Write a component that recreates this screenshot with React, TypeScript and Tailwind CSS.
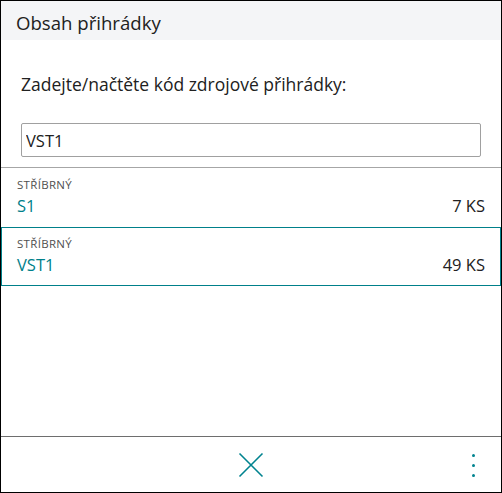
import React from "react";

const ROWS: { zone: string; bin: string; qty: string; selected?: boolean }[] = [
  { zone: "STŘÍBRNÝ", bin: "S1", qty: "7 KS" },
  { zone: "STŘÍBRNÝ", bin: "VST1", qty: "49 KS", selected: true },
];

function BinRow({ zone, bin, qty, selected }: (typeof ROWS)[number]) {
  return (
    <div
      className={`h-[59px] flex flex-col justify-center px-[15px] border ${
        selected ? "border-[#00808a]" : "border-transparent"
      }`}
    >
      <div className="text-[11.5px] leading-[16px] text-[#505050] tracking-[0.3px]">{zone}</div>
      <div className="flex items-baseline justify-between">
        <span className="text-[16.5px] leading-[26px] text-[#00808a]">{bin}</span>
        <span className="text-[16.5px] leading-[26px] text-[#212121]">{qty}</span>
      </div>
    </div>
  );
}

export default function App() {
  return (
    <div
      className="w-[502px] h-[493px] border border-black bg-white flex flex-col"
      style={{ fontFamily: '"Open Sans", "Noto Sans", sans-serif' }}
    >
      <header className="h-[39px] bg-[#f4f5f7] flex items-center px-[15px] pt-[5px]">
        <span className="text-[18.6px] text-[#212121]">Obsah přihrádky</span>
      </header>

      <div className="px-[20px] pt-[31px] pb-[10px] border-b border-[#a6a6a6]">
        <div className="text-[17.5px] leading-[26px] text-[#212121]">
          Zadejte/načtěte kód zdrojové přihrádky:
        </div>
        <input
          readOnly
          value="VST1"
          className="mt-[26px] w-full h-[34px] border border-[#a0a0a0] rounded-[2px] px-[4px] text-[16.5px] text-[#212121] outline-none"
        />
      </div>

      <div className="flex-1 flex flex-col">
        {ROWS.map((r) => (
          <BinRow key={r.bin} {...r} />
        ))}
      </div>

      <footer className="h-[56px] border-t border-[#6e6e6e] flex items-center relative">
        <button className="mx-auto w-[28px] h-[28px] grid place-items-center" aria-label="Zavřít">
          <svg width="26" height="26" viewBox="0 0 26 26" fill="none" stroke="#00838f" strokeWidth="1.6">
            <path d="M1.5 1.5 L24.5 24.5 M24.5 1.5 L1.5 24.5" />
          </svg>
        </button>
        <button className="absolute right-[26px] top-[17px] flex flex-col gap-[7px]" aria-label="Více">
          <span className="w-[3px] h-[3px] rounded-full bg-[#00838f]" />
          <span className="w-[3px] h-[3px] rounded-full bg-[#00838f]" />
          <span className="w-[3px] h-[3px] rounded-full bg-[#00838f]" />
        </button>
      </footer>
    </div>
  );
}
